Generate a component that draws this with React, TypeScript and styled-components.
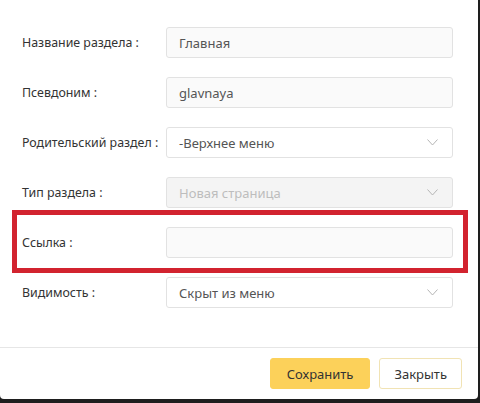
import React from "react";
import styled, { createGlobalStyle } from "styled-components";

const GlobalStyle = createGlobalStyle`
  html, body {
    margin: 0;
    padding: 0;
    background: #1e1e1e;
  }
  body {
    font-family: "Noto Sans", "Open Sans", sans-serif;
  }
`;

const Page = styled.div`
  width: 480px;
  height: 403px;
  background: #1e1e1e;
`;

const Modal = styled.div`
  position: relative;
  width: 478px;
  height: 399px;
  background: #fff;
  border-radius: 0 0 4px 4px;
  display: flex;
  flex-direction: column;
`;

const Form = styled.div`
  flex: 1;
  display: flex;
  flex-direction: column;
  gap: 19px;
  padding: 27px 25px 0 22px;
`;

const Row = styled.div`
  display: flex;
  align-items: center;
  height: 31px;
`;

const Label = styled.label`
  width: 144px;
  flex-shrink: 0;
  font-size: 12.4px;
  color: #333;
  white-space: nowrap;
`;

const Field = styled.div<{ $variant?: "text" | "select" | "disabled" }>`
  flex: 1;
  height: 31px;
  box-sizing: border-box;
  display: flex;
  align-items: center;
  justify-content: space-between;
  padding: 0 14px 0 12px;
  border: 1px solid #e2e2e2;
  border-radius: 3px;
  font-size: 13px;
  background: ${(p) =>
    p.$variant === "select" ? "#fff" : p.$variant === "disabled" ? "#f4f4f4" : "#fafafa"};
  color: ${(p) => (p.$variant === "disabled" ? "#bdbdbd" : "#555")};
`;

const Chevron = () => (
  <svg width="11" height="7" viewBox="0 0 11 7" fill="none">
    <path d="M0.5 0.5L5.5 6L10.5 0.5" stroke="#b5b5b5" strokeWidth="1" />
  </svg>
);

const Footer = styled.div`
  display: flex;
  justify-content: flex-end;
  gap: 9px;
  padding: 10px 16px 10px 0;
  border-top: 1px solid #e6e6e6;
`;

const Button = styled.button<{ $primary?: boolean }>`
  height: 31px;
  padding: 0 ${(p) => (p.$primary ? "16px" : "14px")};
  font-family: inherit;
  font-size: 13px;
  color: #333;
  border-radius: 3px;
  border: 1px solid ${(p) => (p.$primary ? "#fcd15a" : "#f1e3b4")};
  background: ${(p) => (p.$primary ? "#fcd15a" : "#fff")};
  cursor: pointer;
`;

const Highlight = styled.div`
  position: absolute;
  left: 12px;
  top: 210px;
  width: 456px;
  height: 63px;
  box-sizing: border-box;
  border: 5px solid #d2232f;
  pointer-events: none;
`;

export default function App() {
  return (
    <Page>
      <GlobalStyle />
      <Modal>
        <Form>
          <Row>
            <Label>Название раздела :</Label>
            <Field>Главная</Field>
          </Row>
          <Row>
            <Label>Псевдоним :</Label>
            <Field>glavnaya</Field>
          </Row>
          <Row>
            <Label>Родительский раздел :</Label>
            <Field $variant="select">
              -Верхнее меню
              <Chevron />
            </Field>
          </Row>
          <Row>
            <Label>Тип раздела :</Label>
            <Field $variant="disabled">
              Новая страница
              <Chevron />
            </Field>
          </Row>
          <Row>
            <Label>Ссылка :</Label>
            <Field />
          </Row>
          <Row>
            <Label>Видимость :</Label>
            <Field $variant="select">
              Скрыт из меню
              <Chevron />
            </Field>
          </Row>
        </Form>
        <Footer>
          <Button $primary>Сохранить</Button>
          <Button>Закрыть</Button>
        </Footer>
        <Highlight />
      </Modal>
    </Page>
  );
}
